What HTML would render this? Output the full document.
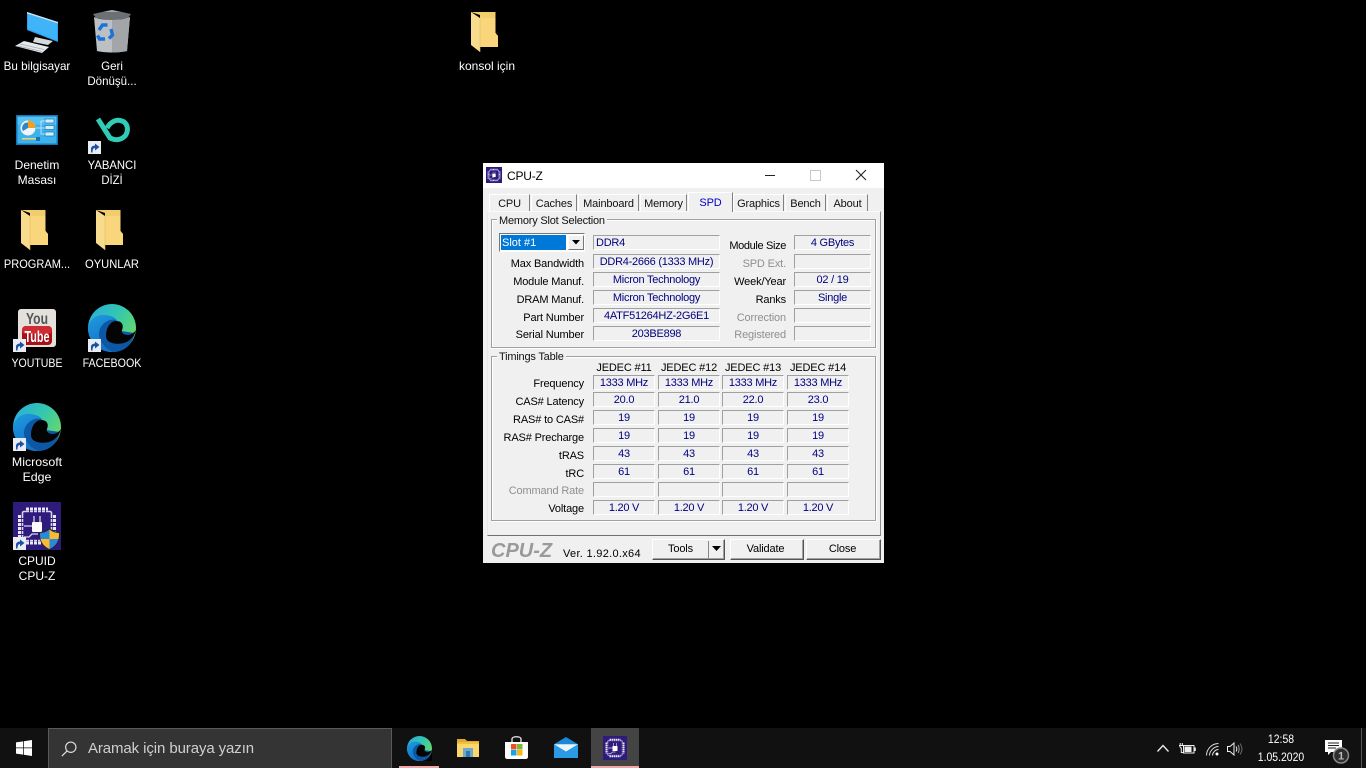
<!DOCTYPE html>
<html lang="tr"><head><meta charset="utf-8"><title>CPU-Z</title>
<style>
html,body{margin:0;padding:0;width:1366px;height:768px;overflow:hidden;background:#000}
body{position:relative;font-family:"Liberation Sans",sans-serif}
div,span,svg{position:absolute;display:block}
.d{color:#fff;font-size:12px;line-height:15px;text-align:center;width:76px;margin-top:1px;text-shadow:0 1px 2px #000}
.w{color:#000;font-size:11px;letter-spacing:-.15px;line-height:14px;white-space:nowrap;margin-top:1px}
.l{text-align:right;width:110px}
.g{color:#8f8f8f}
.f{box-sizing:border-box;height:15px;background:#f0f0f0;border:1px solid;border-color:#a0a0a0 #fff #fff #a0a0a0;color:#00007f;font-size:11px;letter-spacing:-.25px;line-height:15px;text-align:center;white-space:nowrap}
.a{width:127px;left:593px}.b{width:77px;left:794px}
.t{width:62px}
.c1{left:593px}.c2{left:658px}.c3{left:722px}.c4{left:787px}
.h{width:66px;text-align:center;top:360px}
.tab{top:194px;height:17px;box-sizing:border-box;border:1px solid #fff;border-right-color:#808080;border-bottom:0;background:#f0f0f0;font-size:11px;letter-spacing:-.15px;line-height:18px;text-align:center;color:#111}
.grp{box-sizing:border-box;border:1px solid #a0a0a0;box-shadow:inset 1px 1px 0 #fff,1px 1px 0 #fff}
.leg{background:#f0f0f0;padding:0 2px;font-size:11px;letter-spacing:-.2px;line-height:13px;color:#111;white-space:nowrap}
.btn{box-sizing:border-box;top:539px;height:21px;background:#f0f0f0;border:1px solid;border-color:#fff #555 #555 #fff;box-shadow:inset -1px -1px 0 #a0a0a0;font-size:11px;letter-spacing:-.15px;line-height:19px;text-align:center;color:#000}
</style></head><body>
<svg width="0" height="0" style="position:absolute">
<defs>
<linearGradient id="e1" x1="0" y1="0" x2="1" y2=".7"><stop offset="0" stop-color="#2aa9e0"/><stop offset=".5" stop-color="#33c6b0"/><stop offset="1" stop-color="#6cdb62"/></linearGradient>
<linearGradient id="e2" x1="0" y1="0" x2=".4" y2="1"><stop offset="0" stop-color="#1e9be0"/><stop offset="1" stop-color="#1272c6"/></linearGradient>
<symbol id="edge" viewBox="0 0 48 48">
<circle cx="24" cy="24" r="24" fill="url(#e1)"/>
<path d="M48 27C48 31 47 37 40 44 34 48 28 48 24 48H48z" fill="#000"/>
<path d="M0 24C2 14 10 10 18 11 26 12 30 16 30 19L20 31C20 38 24 44 30 47 28 48 26 48 24 48 10 48 0 37 0 24z" fill="url(#e2)"/>
<path d="M28 16C20 14 11 21 11 30 11 38 18 45 25 48 36 48 44 41 47 29L33 27z" fill="#0d58a6"/>
<path d="M18 32C18 23 23 17 28 17 34 17 36 21 34 26 33 29 36 31 40 31 43 31 46 29 48 26 46 33 42 37 36 39 27 41 18 39 18 32z" fill="#040404"/>
</symbol>
<symbol id="folder" viewBox="0 0 27 40">
<path d="M0 0H24.500V21L27 24V35H9V3z" fill="#f2cd6c"/>
<path d="M9 6H24.500V21L27 24V35H9z" fill="#f9d67c"/>
<path d="M0 0 9 6V40L0 33z" fill="#f8dc8d"/>
<path d="M9 6V40" stroke="#e3bb5e" stroke-width=".6"/>
</symbol>
<symbol id="arrow" viewBox="0 0 13 13">
<rect width="13" height="13" fill="#e9edf3"/><path d="M3 11.500V8C3 5.500 5 4.500 7 4.500V2.500L11.500 6 7 9.500V7C5.500 7 4.500 8.500 4.500 11.500z" fill="#1d4fa3"/>
</symbol>
<symbol id="chip" viewBox="0 0 48 48">
<rect width="48" height="48" fill="#2f1b7b"/>
<rect x="9.500" y="9.500" width="29" height="29" rx="1.500" fill="none" stroke="#d8d4ee" stroke-width="1.600"/>
<g fill="#e9e7f6"><rect x="13" y="5.500" width="22" height="3"/><rect x="13" y="39.500" width="22" height="3"/><rect x="5" y="13" width="3" height="22"/><rect x="40" y="13" width="3" height="22"/></g>
<g fill="#2f1b7b"><rect x="16" y="5" width="1" height="38"/><rect x="20" y="5" width="1" height="38"/><rect x="24" y="5" width="1" height="38"/><rect x="28" y="5" width="1" height="38"/><rect x="32" y="5" width="1" height="38"/><rect x="5" y="16" width="38" height="1"/><rect x="5" y="20" width="38" height="1"/><rect x="5" y="24" width="38" height="1"/><rect x="5" y="28" width="38" height="1"/><rect x="5" y="32" width="38" height="1"/></g>
<rect x="19" y="20" width="10" height="10" rx="1" fill="#fff"/>
<path d="M21 14V20M27 14V20M11 24H19M11 35H16L19 32H25" stroke="#d8d4ee" stroke-width="1.300" fill="none"/>
</symbol>
</defs></svg>

<!-- Desktop icons -->
<svg style="left:0;top:0" width="70" height="60" viewBox="0 0 70 60">
<path d="M27 12 58 22V42L27 30z" fill="#2f9eee"/><path d="M28 14 57 23.500V40.500L28 29z" fill="#3fb4f8"/><path d="M27 12 58 22V23.500L27 13.500z" fill="#cfe3f0"/>
<path d="M35 37 53 41 48 45 33 42z" fill="#d5d9dc"/>
<path d="M24 41 49 47 42 53 15 46z" fill="#e6e8eb"/>
<path d="M20 44 44 49.500M18 46 42 51.500" stroke="#a5aaaf" stroke-width=".7"/>
</svg>
<div class="d" style="left:-1px;top:58px;transform:scaleX(.97)">Bu bilgisayar</div>

<svg style="left:92px;top:10px" width="40" height="43" viewBox="0 0 40 43">
<path d="M1 4 20 0 39 4 36 8 20 11 4 8z" fill="#6c7074"/><path d="M1 4 20 0 39 4 30 2H10z" fill="#a5a9ad"/>
<path d="M2 7C10 11 30 11 38 7L35 41C27 43 13 43 5 41z" fill="#bdc0c3"/><path d="M20 10C27 10 33 9 38 7L35 41C30 42 25 42.500 20 42.500z" fill="#a3a6a9"/>
<g fill="none" stroke="#1a72dc" stroke-width="3.400"><path d="M7 20 10.500 15H15.500"/><path d="M19 19 20.500 25 17 28.500"/><path d="M13 29H7.500L5.500 25.500"/></g>
</svg>
<div class="d" style="left:74px;top:58px;transform:scaleX(.96)">Geri<br>Dönüşü...</div>

<svg style="left:16px;top:115px" width="42" height="30" viewBox="0 0 42 30">
<rect width="42" height="30" fill="#1275b8"/><rect x="1.500" y="1.500" width="39" height="27" fill="#3fb2ec"/>
<rect x="1.500" y="1.500" width="39" height="8" fill="#6fd0f5" opacity=".5"/>
<circle cx="12" cy="13" r="7.500" fill="#f2f5f7"/><path d="M12 13V5.500A7.500 7.500 0 0 1 19.500 13z" fill="#f0a020"/><path d="M12 13V7.500A5.500 5.500 0 0 0 7 16z" fill="#2e86c8"/>
<g fill="#d5edf9" stroke="#1275b8" stroke-width=".7"><rect x="29" y="4" width="9" height="4"/><rect x="29" y="10.500" width="9" height="4"/><rect x="29" y="17" width="9" height="4"/></g>
<path d="M20 13H25V6H29M25 13H29M25 13V19H29" stroke="#cfeefb" fill="none" stroke-width=".8"/>
<rect x="6" y="23" width="18" height="1.500" fill="#f2d36b"/><rect x="20" y="22" width="4" height="4" fill="#1275b8"/>
</svg>
<div class="d" style="left:-1px;top:157px">Denetim<br>Masası</div>

<svg style="left:96px;top:117px" width="34" height="26" viewBox="0 0 34 26">
<path d="M2 2 14 21C18 23 24 24 29 19 33 14 32 6 26 4 21 2 15 4 11 11" fill="none" stroke="#2fcdb8" stroke-width="5"/>
</svg>
<svg style="left:88px;top:141px" width="13" height="13"><use href="#arrow"/></svg>
<div class="d" style="left:74px;top:157px;transform:scaleX(.94)">YABANCI<br>DİZİ</div>

<svg style="left:21px;top:210px" width="27" height="40"><use href="#folder"/></svg>
<div class="d" style="left:-1px;top:256px;transform:scaleX(.92)">PROGRAM...</div>
<svg style="left:96px;top:210px" width="27" height="40"><use href="#folder"/></svg>
<div class="d" style="left:74px;top:256px;transform:scaleX(.93)">OYUNLAR</div>

<svg style="left:18px;top:309px" width="38" height="38" viewBox="0 0 38 38">
<rect width="38" height="38" rx="3" fill="#e4e1dc"/>
<rect x="4" y="17" width="30" height="19" rx="4" fill="#a81018"/><rect x="4" y="17" width="30" height="8" rx="4" fill="#d02a34"/>
<text x="19" y="15" font-family="Liberation Sans,sans-serif" font-size="16" font-weight="bold" text-anchor="middle" fill="#555" textLength="22" lengthAdjust="spacingAndGlyphs">You</text>
<text x="19" y="33" font-family="Liberation Sans,sans-serif" font-size="16" font-weight="bold" text-anchor="middle" fill="#fff" textLength="25" lengthAdjust="spacingAndGlyphs">Tube</text>
</svg>
<svg style="left:13px;top:339px" width="13" height="13"><use href="#arrow"/></svg>
<div class="d" style="left:-1px;top:355px;transform:scaleX(.88)">YOUTUBE</div>

<svg style="left:88px;top:304px" width="48" height="48"><use href="#edge"/></svg>
<svg style="left:88px;top:339px" width="13" height="13"><use href="#arrow"/></svg>
<div class="d" style="left:74px;top:355px;transform:scaleX(.89)">FACEBOOK</div>

<svg style="left:13px;top:403px" width="48" height="48"><use href="#edge"/></svg>
<svg style="left:13px;top:438px" width="13" height="13"><use href="#arrow"/></svg>
<div class="d" style="left:-1px;top:454px;transform:scaleX(1.03)">Microsoft<br>Edge</div>

<svg style="left:13px;top:502px" width="48" height="48"><use href="#chip"/></svg>
<svg style="left:39px;top:528px" width="21" height="22" viewBox="0 0 21 22">
<path d="M10.500 0C14 3 17 4 21 4 21 13 18 19 10.500 22 3 19 0 13 0 4 4 4 7 3 10.500 0z" fill="#26262e"/>
<path d="M10.500 1.500V11H1.500C1 8 1 7 1 5 4 5 7.500 4 10.500 1.500z" fill="#2a8ad8"/><path d="M10.500 1.500C13.500 4 17 5 20 5 20 7 20 9 19.500 11H10.500z" fill="#f8bc33"/>
<path d="M1.500 11H10.500V21C6 19 3 16 1.500 11z" fill="#f8bc33"/><path d="M10.500 11H19.500C18 16 15 19 10.500 21z" fill="#2a8ad8"/>
</svg>
<svg style="left:13px;top:537px" width="13" height="13"><use href="#arrow"/></svg>
<div class="d" style="left:-1px;top:553px">CPUID<br>CPU-Z</div>

<svg style="left:471px;top:12px" width="27" height="40"><use href="#folder"/></svg>
<div class="d" style="left:449px;top:58px">konsol için</div>

<!-- CPU-Z window -->
<div style="left:483px;top:163px;width:401px;height:400px;background:#f0f0f0"></div>
<div style="left:483px;top:163px;width:401px;height:25px;background:#fff"></div>
<svg style="left:486px;top:167px" width="16" height="16"><use href="#chip"/></svg>
<div class="w" style="left:507px;top:167px;font-size:12px;letter-spacing:-.2px;line-height:16px">CPU-Z</div>
<div style="left:765px;top:175px;width:10px;height:1px;background:#222"></div>
<div style="left:810px;top:170px;width:9px;height:9px;border:1px solid #c8c8c8"></div>
<svg style="left:855px;top:169px" width="12" height="12"><path d="M1 1 11 11M11 1 1 11" stroke="#222" stroke-width="1.100"/></svg>

<!-- tab page -->
<div style="left:487px;top:211px;width:394px;height:325px;box-sizing:border-box;border:1px solid;border-color:#fbfbfb #909090 #707070 #e6e6e6;background:#f0f0f0"></div>
<div class="tab" style="left:489px;width:41px">CPU</div>
<div class="tab" style="left:531px;width:46px">Caches</div>
<div class="tab" style="left:578px;width:61px">Mainboard</div>
<div class="tab" style="left:640px;width:47px">Memory</div>
<div class="tab" style="left:733px;width:51px">Graphics</div>
<div class="tab" style="left:785px;width:41px">Bench</div>
<div class="tab" style="left:827px;width:41px">About</div>
<div class="tab" style="left:688px;top:192px;width:45px;height:20px;color:#0000c0;line-height:20px;z-index:2">SPD</div>

<!-- Memory Slot -->
<div class="grp" style="left:491px;top:219px;width:385px;height:129px"></div>
<div class="leg" style="left:497px;top:215px">Memory Slot Selection</div>
<div style="left:499px;top:233px;width:86px;height:19px;box-sizing:border-box;border:1px solid;border-color:#777 #fff #fff #777;background:#fff"></div>
<div style="left:501px;top:235px;width:65px;height:15px;background:#0078d7;color:#fff;font-size:11px;line-height:17px;text-indent:1px">Slot #1</div>
<div style="left:568px;top:235px;width:16px;height:15px;box-sizing:border-box;background:#f0f0f0;border:1px solid;border-color:#fff #777 #777 #fff"></div>
<svg style="left:572px;top:240px" width="8" height="5"><path d="M0 0H8L4 4.500z" fill="#000"/></svg>

<div class="f a" style="top:235px;text-align:left;padding-left:2px">DDR4</div>
<div class="f a" style="top:254px">DDR4-2666 (1333 MHz)</div>
<div class="f a" style="top:272px">Micron Technology</div>
<div class="f a" style="top:290px">Micron Technology</div>
<div class="f a" style="top:308px">4ATF51264HZ-2G6E1</div>
<div class="f a" style="top:326px">203BE898</div>
<div class="w l" style="left:474px;top:256px">Max Bandwidth</div>
<div class="w l" style="left:474px;top:274px">Module Manuf.</div>
<div class="w l" style="left:474px;top:292px">DRAM Manuf.</div>
<div class="w l" style="left:474px;top:310px">Part Number</div>
<div class="w l" style="left:474px;top:327px">Serial Number</div>

<div class="f b" style="top:235px">4 GBytes</div>
<div class="f b" style="top:254px"></div>
<div class="f b" style="top:272px">02 / 19</div>
<div class="f b" style="top:290px">Single</div>
<div class="f b" style="top:308px"></div>
<div class="f b" style="top:326px"></div>
<div class="w l" style="left:676px;top:238px;letter-spacing:-.35px">Module Size</div>
<div class="w l g" style="left:676px;top:256px">SPD Ext.</div>
<div class="w l" style="left:676px;top:274px">Week/Year</div>
<div class="w l" style="left:676px;top:292px">Ranks</div>
<div class="w l g" style="left:676px;top:310px">Correction</div>
<div class="w l g" style="left:676px;top:327px">Registered</div>

<!-- Timings -->
<div class="grp" style="left:491px;top:356px;width:385px;height:165px"></div>
<div class="leg" style="left:497px;top:351px">Timings Table</div>
<div class="w h" style="left:591px">JEDEC #11</div>
<div class="w h" style="left:656px">JEDEC #12</div>
<div class="w h" style="left:720px">JEDEC #13</div>
<div class="w h" style="left:785px">JEDEC #14</div>

<div class="w l" style="left:474px;top:376px">Frequency</div>
<div class="w l" style="left:474px;top:394px">CAS# Latency</div>
<div class="w l" style="left:474px;top:412px">RAS# to CAS#</div>
<div class="w l" style="left:474px;top:430px">RAS# Precharge</div>
<div class="w l" style="left:474px;top:448px">tRAS</div>
<div class="w l" style="left:474px;top:466px">tRC</div>
<div class="w l g" style="left:474px;top:483px">Command Rate</div>
<div class="w l" style="left:474px;top:501px">Voltage</div>

<div class="f t c1" style="top:375px">1333 MHz</div><div class="f t c2" style="top:375px">1333 MHz</div><div class="f t c3" style="top:375px">1333 MHz</div><div class="f t c4" style="top:375px">1333 MHz</div>
<div class="f t c1" style="top:392px">20.0</div><div class="f t c2" style="top:392px">21.0</div><div class="f t c3" style="top:392px">22.0</div><div class="f t c4" style="top:392px">23.0</div>
<div class="f t c1" style="top:410px">19</div><div class="f t c2" style="top:410px">19</div><div class="f t c3" style="top:410px">19</div><div class="f t c4" style="top:410px">19</div>
<div class="f t c1" style="top:428px">19</div><div class="f t c2" style="top:428px">19</div><div class="f t c3" style="top:428px">19</div><div class="f t c4" style="top:428px">19</div>
<div class="f t c1" style="top:446px">43</div><div class="f t c2" style="top:446px">43</div><div class="f t c3" style="top:446px">43</div><div class="f t c4" style="top:446px">43</div>
<div class="f t c1" style="top:464px">61</div><div class="f t c2" style="top:464px">61</div><div class="f t c3" style="top:464px">61</div><div class="f t c4" style="top:464px">61</div>
<div class="f t c1" style="top:482px"></div><div class="f t c2" style="top:482px"></div><div class="f t c3" style="top:482px"></div><div class="f t c4" style="top:482px"></div>
<div class="f t c1" style="top:500px">1.20 V</div><div class="f t c2" style="top:500px">1.20 V</div><div class="f t c3" style="top:500px">1.20 V</div><div class="f t c4" style="top:500px">1.20 V</div>

<!-- Footer -->
<div style="left:491px;top:539px;font:italic bold 20px/24px 'Liberation Sans',sans-serif;color:#9a9a9a;white-space:nowrap">CPU-Z</div>
<div class="w" style="left:563px;top:546px;letter-spacing:.3px">Ver. 1.92.0.x64</div>
<div class="btn" style="left:652px;width:73px;text-align:left;padding-left:15px">Tools</div>
<div style="left:708px;top:541px;width:1px;height:17px;background:#888"></div>
<svg style="left:712px;top:546px" width="9" height="5"><path d="M0 0H9L4.500 5z" fill="#000"/></svg>
<div class="btn" style="left:730px;width:74px;padding-right:3px">Validate</div>
<div class="btn" style="left:806px;width:75px;padding-right:2px">Close</div>

<!-- Taskbar -->
<div style="left:0;top:728px;width:1366px;height:40px;background:#111"></div>
<svg style="left:16px;top:740px" width="16" height="16" viewBox="0 0 17 17"><path d="M0 2.500 7.500 1.400V8H0zM8.300 1.300 17 0V8H8.300zM0 8.800H7.500V15.500L0 14.500zM8.300 8.800H17V17L8.300 15.700z" fill="#fff"/></svg>
<div style="left:48px;top:728px;width:344px;height:40px;box-sizing:border-box;background:#343434;border:1px solid #5a5a5a;border-bottom:0"></div>
<svg style="left:61px;top:741px" width="16" height="16" viewBox="0 0 18 18"><circle cx="11" cy="7" r="5.800" fill="none" stroke="#ddd" stroke-width="1.300"/><path d="M7 11 1 17" stroke="#ddd" stroke-width="1.400"/></svg>
<div style="left:88px;top:740px;color:#cfcfcf;font-size:15px;letter-spacing:-.1px;line-height:18px;white-space:nowrap">Aramak için buraya yazın</div>

<div style="left:399px;top:766px;width:40px;height:2px;background:#f3a6a6"></div>
<svg style="left:407px;top:736px" width="25" height="25"><use href="#edge"/></svg>
<svg style="left:457px;top:737px" width="22" height="22" viewBox="0 0 22 22">
<path d="M0 2H8L10 4H22V6H0z" fill="#e0a92e"/><rect y="5" width="22" height="15" fill="#fbd66c"/><rect y="5" width="22" height="2" fill="#f0c040"/>
<rect x="6" y="11" width="10" height="9" fill="#6fa8cc"/><rect x="9" y="14" width="4" height="6" fill="#2f7bb0"/>
</svg>
<svg style="left:505px;top:735px" width="23" height="24" viewBox="0 0 23 24">
<path d="M7 7V4C7 1 16 1 16 4V7" fill="none" stroke="#eee" stroke-width="1.300"/><path d="M0 7H23V22C23 23 22 24 21 24H2C1 24 0 23 0 22z" fill="#fff"/>
<rect x="6" y="9" width="5.500" height="5.500" fill="#e8512a"/><rect x="12" y="9" width="5.500" height="5.500" fill="#7cb92c"/><rect x="6" y="15" width="5.500" height="5.500" fill="#12a5ea"/><rect x="12" y="15" width="5.500" height="5.500" fill="#fbb516"/>
</svg>
<svg style="left:554px;top:737px" width="24" height="21" viewBox="0 0 24 23" preserveAspectRatio="none">
<path d="M0 8 12 0 24 8V23H0z" fill="#1a88d8"/><path d="M0 8H24L12 16z" fill="#e9f4fb"/><path d="M0 8 12 17 24 8V23H0z" fill="#2b9be6"/>
</svg>
<div style="left:591px;top:728px;width:48px;height:40px;background:#444"></div>
<div style="left:591px;top:766px;width:48px;height:2px;background:#f3a6a6"></div>
<svg style="left:603px;top:736px" width="24" height="24"><use href="#chip"/></svg>

<!-- Tray -->
<svg style="left:1157px;top:744px" width="12" height="8"><path d="M.5 7.500 6 1.500 11.500 7.500" fill="none" stroke="#eee" stroke-width="1.300"/></svg>
<svg style="left:1179px;top:743px" width="17" height="11" viewBox="0 0 17 11">
<path d="M0 2.500H4.500M1.200 0V2.500M3.300 0V2.500M.8 2.500C.8 5 2.300 5 2.300 5V9.500H4" stroke="#eee" stroke-width="1" fill="none"/>
<rect x="4.500" y="2.500" width="10.500" height="7.500" fill="none" stroke="#eee"/><rect x="5.500" y="3.500" width="7" height="5.500" fill="#eee"/><rect x="15.300" y="4.500" width="1.500" height="3.500" fill="#eee"/>
</svg>
<svg style="left:1206px;top:743px" width="13" height="13" viewBox="0 0 13 13" fill="none" stroke="#ddd" stroke-width="1">
<path d="M.5 12.500C.5 6 6 .5 12.500 .5M3.500 12.500C3.500 8 8 3.500 12.500 3.500M6.500 12.500C6.500 10 9 6.500 12.500 6.500"/><circle cx="11" cy="11" r="1.500" fill="#fff" stroke="none"/>
</svg>
<svg style="left:1227px;top:742px" width="16" height="14" viewBox="0 0 16 14" fill="none" stroke="#eee" stroke-width="1">
<path d="M.5 4.500H3L7 1V13L3 9.500H.5z"/><path d="M9 4.500C10 6 10 8 9 9.500"/><path d="M11 3C12.500 5 12.500 9 11 11" stroke="#aaa"/><path d="M13 1.500C15.500 5 15.500 9 13 12.500" stroke="#666"/>
</svg>
<div style="left:1251px;top:731px;width:60px;text-align:center;color:#fff;font-size:12px;line-height:16px;transform:scaleX(.87)">12:58</div>
<div style="left:1251px;top:749px;width:60px;text-align:center;color:#fff;font-size:12px;line-height:16px;transform:scaleX(.87)">1.05.2020</div>
<svg style="left:1325px;top:740px" width="25" height="24" viewBox="0 0 25 24">
<path d="M0 0H17V12H6L3 15V12H0z" fill="#fff"/><path d="M3 3H14M3 5.500H14M3 8H11" stroke="#222" stroke-width=".9"/>
<circle cx="16" cy="15.500" r="7.500" fill="#2e2e2e" stroke="#8a8a8a" stroke-width="1.500"/>
<text x="16" y="19.500" font-family="Liberation Sans,sans-serif" font-size="11" font-weight="bold" text-anchor="middle" fill="#bbb">1</text>
</svg>
<div style="left:1361px;top:728px;width:1px;height:40px;background:#555"></div>
</body></html>
